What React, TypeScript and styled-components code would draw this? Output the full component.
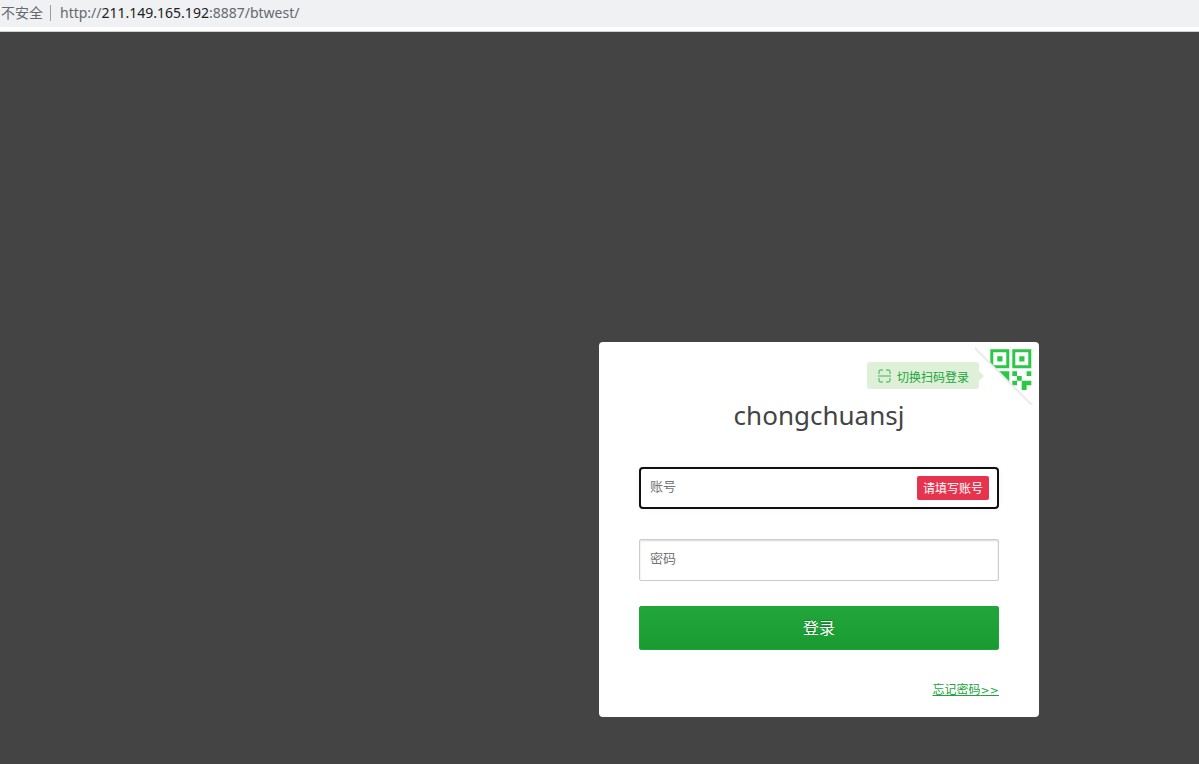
import React from "react";
import styled, { createGlobalStyle } from "styled-components";

const GlobalStyle = createGlobalStyle`
  *, *::before, *::after { box-sizing: border-box; }
  body {
    margin: 0;
    background: #444;
    color: #444;
    font-family: "Noto Sans", "Noto Sans CJK SC", sans-serif;
    font-size: 12px;
  }
`;

const Page = styled.div`
  display: flex;
  flex-direction: column;
  min-height: 100vh;
`;

const AddressBar = styled.header`
  display: flex;
  align-items: center;
  height: 32px;
  padding: 0 1px 6px;
  background: linear-gradient(#eff1f3 27px, #fff 27px, #fff 31px, #d0d0d0 31px);
  color: #66696d;
  font-size: 14px;
  line-height: 20px;
  white-space: nowrap;
`;

const Security = styled.span`
  padding-right: 7px;
`;

const Url = styled.span`
  display: flex;
  align-items: center;
  &::before {
    content: "";
    width: 1px;
    height: 16px;
    margin-right: 9px;
    background: #9b9da0;
  }
`;

const Host = styled.b`
  color: #202124;
  font-weight: 400;
`;

const Main = styled.main`
  flex: 1;
  padding: 310px 160px 47px;
`;

const Card = styled.section`
  position: relative;
  width: 440px;
  max-width: 100%;
  margin-left: auto;
  padding: 20px 40px 17px;
  border-radius: 4px;
  background: #fff;
`;

const ScanSwitch = styled.button`
  position: relative;
  display: flex;
  align-items: center;
  gap: 5px;
  height: 27px;
  margin: 0 20px 0 auto;
  padding: 2px 10px 0;
  border: 0;
  border-radius: 3px;
  background: #dff0d8;
  color: #20a53a;
  font: inherit;
  white-space: nowrap;
  cursor: pointer;
  &::after {
    content: "";
    position: absolute;
    top: 9px;
    left: 100%;
    border: 5px solid transparent;
    border-left-color: #dff0d8;
    border-right: 0;
  }
`;

const ScanGlyph = styled.svg`
  flex: none;
  margin-bottom: 2px;
`;

const QrCorner = styled.button`
  position: absolute;
  top: 0;
  right: 0;
  width: 64px;
  height: 64px;
  padding: 0;
  border: 0;
  background: none;
  cursor: pointer;
`;

const Title = styled.h1`
  margin: 6px 0 32px;
  color: #444;
  font-size: 26px;
  font-weight: 400;
  line-height: 40px;
  text-align: center;
`;

const Field = styled.label`
  position: relative;
  display: block;
  margin-bottom: 30px;
`;

const TextInput = styled.input<{ $active?: boolean }>`
  display: block;
  width: 100%;
  height: 42px;
  padding: 0 ${(p) => (p.$active ? "9px" : "10px")} 4px;
  border: ${(p) => (p.$active ? "2px solid #101010" : "1px solid #ccc")};
  border-radius: ${(p) => (p.$active ? "4px" : "2px")};
  outline: none;
  background: #fff;
  box-shadow: ${(p) =>
    p.$active ? "0 0 5px rgba(0, 0, 0, 0.06)" : "inset 0 1px 2px rgba(0, 0, 0, 0.15)"};
  color: #444;
  font: inherit;
  font-size: 13px;
  &::placeholder {
    color: #757575;
    opacity: 1;
  }
`;

const ErrorTip = styled.span`
  position: absolute;
  top: 9px;
  right: 10px;
  height: 24px;
  padding: 0 6px;
  border-radius: 2px;
  background: #e6344f;
  color: #fff;
  line-height: 25px;
`;

const Submit = styled.button`
  display: block;
  width: 100%;
  height: 44px;
  margin-top: -5px;
  padding: 0 0 2px;
  border: 1px solid #20a53a;
  border-radius: 2px;
  background: linear-gradient(#22a63c, #199b32);
  color: #fff;
  font: inherit;
  font-size: 16px;
  text-shadow: 0 -1px 0 #148128;
  cursor: pointer;
`;

const Footer = styled.div`
  padding-top: 30px;
  line-height: 20px;
  text-align: right;
`;

const ForgotLink = styled.a`
  color: #20a53a;
  text-decoration: underline;
`;

const Chevrons = styled.span`
  font-family: "DejaVu Sans", sans-serif;
  font-size: 11px;
  line-height: 1;
`;

function QrDrawing() {
  return (
    <svg width="64" height="64" viewBox="0 0 64 64" aria-hidden="true">
      <defs>
        <clipPath id="fold">
          <path d="M0 0H64V64H59L0 5Z" />
        </clipPath>
        <linearGradient id="shade" gradientUnits="userSpaceOnUse" x1="29" y1="34" x2="27" y2="36">
          <stop offset="0" stopColor="#e2e2e2" />
          <stop offset="1" stopColor="#fff" />
        </linearGradient>
      </defs>
      <path d="M0 5L58 63H54L0 9Z" fill="url(#shade)" />
      <g fill="#2ac845" clipPath="url(#fold)">
        <path d="M15.3 7.3H34.3V26.2H15.3Z M18.3 10.3V23.2H31.3V10.3Z" fillRule="evenodd" />
        <path d="M37.3 7.3H56.3V26.2H37.3Z M40.3 10.3V23.2H53.3V10.3Z" fillRule="evenodd" />
        <path d="M22.3 14.2H27.5V19.4H22.3Z M44.3 14.2H49.5V19.4H44.3Z" />
        <path d="M15 29.2H34.3V43H15Z" />
        <path d="M37.3 29.2H42V34H37.3Z M42 34H46.7V38.7H42Z M37.3 38.7H42V43.3H37.3Z M51.6 29.2H56.3V34H51.6Z" />
        <path d="M46.7 38.7H56.3V43.3H51.6V48H46.7Z" />
      </g>
    </svg>
  );
}

export default function App() {
  return (
    <>
      <GlobalStyle />
      <Page>
        <AddressBar>
          <Security>不安全</Security>
          <Url>
            <span>
              http://<Host>211.149.165.192</Host>:8887/btwest/
            </span>
          </Url>
        </AddressBar>
        <Main>
          <Card>
            <QrCorner type="button" aria-label="扫码登录">
              <QrDrawing />
            </QrCorner>
            <ScanSwitch type="button">
              <ScanGlyph width="15" height="14" viewBox="0 0 15 14" aria-hidden="true">
                <path
                  d="M2 5V3Q2 1 4 1H6 M9 1H11Q13 1 13 3V5 M2 9V11Q2 13 4 13H6 M9 13H11Q13 13 13 11V9"
                  fill="none"
                  stroke="#6cc67a"
                  strokeWidth="1.5"
                />
                <path d="M1 7H14" stroke="#8fd098" strokeWidth="2" />
              </ScanGlyph>
              切换扫码登录
            </ScanSwitch>
            <Title>chongchuansj</Title>
            <form onSubmit={(e) => e.preventDefault()}>
              <Field>
                <TextInput $active type="text" placeholder="账号" aria-label="账号" />
                <ErrorTip role="alert">请填写账号</ErrorTip>
              </Field>
              <Field>
                <TextInput type="password" placeholder="密码" aria-label="密码" />
              </Field>
              <Submit type="submit">登录</Submit>
            </form>
            <Footer>
              <ForgotLink href="#forgot">
                忘记密码<Chevrons>&gt;&gt;</Chevrons>
              </ForgotLink>
            </Footer>
          </Card>
        </Main>
      </Page>
    </>
  );
}
